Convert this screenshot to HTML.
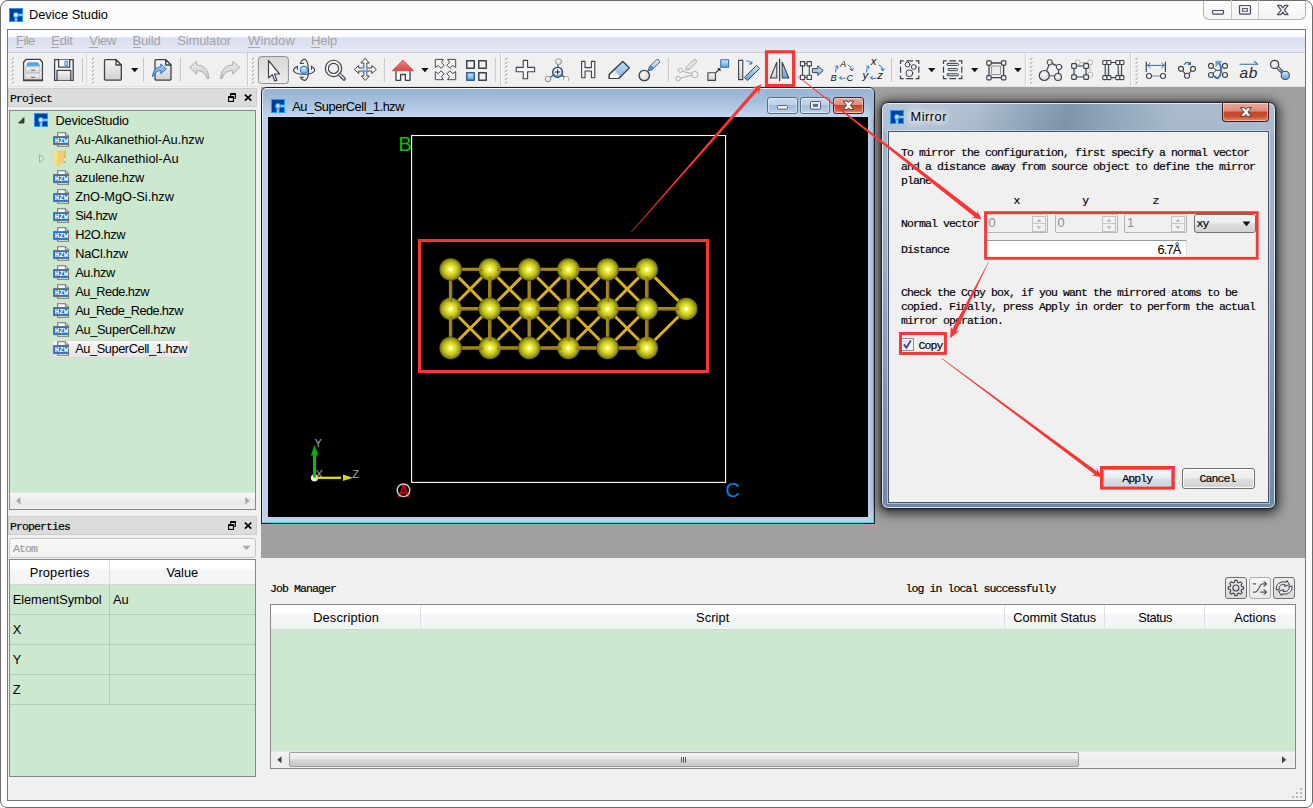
<!DOCTYPE html>
<html><head><meta charset="utf-8"><title>Device Studio</title>
<style>
html,body{margin:0;padding:0;background:#fff;}
body{width:1313px;height:808px;position:relative;overflow:hidden;font-family:"Liberation Sans",sans-serif;font-size:12.8px;}
.t{position:absolute;white-space:nowrap;}
.b{position:absolute;box-sizing:border-box;}
.a{position:absolute;}
svg{overflow:visible}

.frame{left:0;top:0;width:1313px;height:808px;border:1px solid #6b6b6b;border-radius:8px 8px 7px 7px;background:#fcfcfc;}
.client{left:7px;top:29px;width:1299px;height:772px;border:1px solid #767676;background:#f0f0f0;}
.menubar{left:8px;top:30px;width:1297px;height:22px;background:linear-gradient(#fff 0,#fafbfd 30%,#dadeee 36%,#dfe3f1 70%,#e6e9f5 100%);border-bottom:1px solid #c9cde0;}
.hdr{background:#dcdcdc;}
.green{background:#cce8cf;}
.th{background:linear-gradient(#fff 0,#fff 34%,#f5f6f8 40%,#f2f3f5 100%);border-right:1px solid #dcdfe3;border-bottom:1px solid #d5d5d5;}

</style></head><body>
<div class="b frame" style="left:0px;top:0px;width:1313px;height:808px;"></div>
<div class="b client" style="left:7px;top:29px;width:1299px;height:772px;"></div>
<svg class="a" style="left:9px;top:8px" width="14" height="14" viewBox="0 0 14 14"><rect x=".5" y=".5" width="13" height="13" fill="#003c98" stroke="#1e9bff" stroke-width="1"/><path d="M7 13.500V7H13.500" stroke="#1e9bff" stroke-width="3.200" fill="none"/><path d="M7 14V7H14" stroke="#92dbf0" stroke-width="1.600" fill="none"/><circle cx="6.900" cy="6.900" r="2.900" fill="#1e9bff"/><circle cx="6.900" cy="6.900" r="1.900" fill="#eef6fb"/></svg>
<div class="t" style="left:29px;top:7.06px;font-size:12.8px;line-height:16px;color:#000;letter-spacing:0.002px;">Device Studio</div>
<div class="b " style="left:1203px;top:1px;width:103px;height:19px;border:1px solid #b4b4b4;border-top:none;border-radius:0 0 6px 6px;background:linear-gradient(#fdfdfd,#f4f4f4);"></div>
<div class="b " style="left:1231px;top:0px;width:1px;height:19px;background:#c4c4c4"></div>
<div class="b " style="left:1258px;top:0px;width:1px;height:19px;background:#c4c4c4"></div>
<svg class="a" style="left:1203px;top:0" width="103" height="20" viewBox="0 0 103 20" fill="none" stroke="#4a4d63" stroke-width="1.2"><rect x="9.5" y="10.5" width="11" height="3.6" rx="0.8" fill="#f4f4f4"/><rect x="36.5" y="5.5" width="11" height="8.6" rx="0.8" fill="#f0f0f0"/><rect x="39.6" y="8.6" width="4.8" height="2.6" fill="#fff" stroke-width="1"/><path d="M74.50 5.40 L77.80 5.40 L79.75 7.92 L81.70 5.40 L85.00 5.40 L81.40 10.05 L85.00 14.70 L81.70 14.70 L79.75 12.18 L77.80 14.70 L74.50 14.70 L78.10 10.05z" fill="#f6f6f6" stroke-linejoin="round"/></svg>
<div class="b menubar" style="left:8px;top:30px;width:1297px;height:23px;"></div>
<div class="t" style="left:16px;top:32.80px;font-size:13px;line-height:16px;color:#a3a3a3;letter-spacing:-0.563px;">File</div>
<div class="t" style="left:51.2px;top:32.80px;font-size:13px;line-height:16px;color:#a3a3a3;letter-spacing:-0.202px;">Edit</div>
<div class="t" style="left:89.3px;top:32.80px;font-size:13px;line-height:16px;color:#a3a3a3;letter-spacing:-0.313px;">View</div>
<div class="t" style="left:132.5px;top:32.80px;font-size:13px;line-height:16px;color:#a3a3a3;letter-spacing:-0.184px;">Build</div>
<div class="t" style="left:177.3px;top:32.80px;font-size:13px;line-height:16px;color:#a3a3a3;letter-spacing:-0.136px;">Simulator</div>
<div class="t" style="left:248px;top:32.80px;font-size:13px;line-height:16px;color:#a3a3a3;letter-spacing:0.125px;">Window</div>
<div class="t" style="left:311px;top:32.80px;font-size:13px;line-height:16px;color:#a3a3a3;letter-spacing:-0.188px;">Help</div>
<div class="b " style="left:16px;top:47px;width:7px;height:1px;background:#a9a9a9"></div>
<div class="b " style="left:51.2px;top:47px;width:8px;height:1px;background:#a9a9a9"></div>
<div class="b " style="left:89.3px;top:47px;width:9px;height:1px;background:#a9a9a9"></div>
<div class="b " style="left:132.5px;top:47px;width:8px;height:1px;background:#a9a9a9"></div>
<div class="b " style="left:248px;top:47px;width:12px;height:1px;background:#a9a9a9"></div>
<div class="b " style="left:311px;top:47px;width:9px;height:1px;background:#a9a9a9"></div>
<div class="b " style="left:8px;top:53px;width:1297px;height:34px;background:#f0f0f0;"></div>
<div class="b " style="left:8px;top:86px;width:1297px;height:1px;background:#e3e3e3;"></div>
<svg class="a" style="left:0;top:0" width="1313" height="90" viewBox="0 0 1313 90"><defs><linearGradient id="gG" x1="0" y1="0" x2="0" y2="1"><stop offset="0" stop-color="#f6f6f6"/><stop offset="1" stop-color="#cfcfcf"/></linearGradient><linearGradient id="gB" x1="0" y1="0" x2="0" y2="1"><stop offset="0" stop-color="#d9e8f8"/><stop offset="1" stop-color="#5d9ee0"/></linearGradient><linearGradient id="gB2" x1="0" y1="0" x2="0" y2="1"><stop offset="0" stop-color="#c2dcf6"/><stop offset="1" stop-color="#8db8e6"/></linearGradient><linearGradient id="gR" x1="0" y1="0" x2="0" y2="1"><stop offset="0" stop-color="#f08a8a"/><stop offset="1" stop-color="#d84646"/></linearGradient><linearGradient id="gU" x1="0" y1="0" x2="0" y2="1"><stop offset="0" stop-color="#ebebeb"/><stop offset="1" stop-color="#cbcbcb"/></linearGradient><radialGradient id="rB" cx=".4" cy=".35" r=".7"><stop offset="0" stop-color="#e6f2fd"/><stop offset="1" stop-color="#3f8fe0"/></radialGradient><radialGradient id="rG" cx=".4" cy=".35" r=".8"><stop offset="0" stop-color="#fafafa"/><stop offset="1" stop-color="#cfcfcf"/></radialGradient><linearGradient id="gP" x1="0" y1="0" x2="0" y2="1"><stop offset="0" stop-color="#d8d8d8"/><stop offset="1" stop-color="#ececec"/></linearGradient><linearGradient id="gB3" x1="0" y1="0" x2="0" y2="1"><stop offset="0" stop-color="#b4d6f6"/><stop offset="1" stop-color="#4f94dc"/></linearGradient><linearGradient id="gB4" x1="0" y1="0" x2="0" y2="1"><stop offset="0" stop-color="#f2f7fd"/><stop offset="1" stop-color="#6ea6e2"/></linearGradient></defs><path d="M14.600000000000001 58.5l-2 2" stroke="#fff" stroke-width="1.1"/><path d="M14.0 57.599999999999994l-2.200 2.200" stroke="#b0b0b0" stroke-width="1.2"/><path d="M14.600000000000001 62.5l-2 2" stroke="#fff" stroke-width="1.1"/><path d="M14.0 61.599999999999994l-2.200 2.200" stroke="#b0b0b0" stroke-width="1.2"/><path d="M14.600000000000001 66.5l-2 2" stroke="#fff" stroke-width="1.1"/><path d="M14.0 65.6l-2.200 2.200" stroke="#b0b0b0" stroke-width="1.2"/><path d="M14.600000000000001 70.5l-2 2" stroke="#fff" stroke-width="1.1"/><path d="M14.0 69.6l-2.200 2.200" stroke="#b0b0b0" stroke-width="1.2"/><path d="M14.600000000000001 74.5l-2 2" stroke="#fff" stroke-width="1.1"/><path d="M14.0 73.6l-2.200 2.200" stroke="#b0b0b0" stroke-width="1.2"/><path d="M14.600000000000001 78.5l-2 2" stroke="#fff" stroke-width="1.1"/><path d="M14.0 77.6l-2.200 2.200" stroke="#b0b0b0" stroke-width="1.2"/><path d="M14.600000000000001 82.5l-2 2" stroke="#fff" stroke-width="1.1"/><path d="M14.0 81.6l-2.200 2.200" stroke="#b0b0b0" stroke-width="1.2"/><path d="M94.8 58.5l-2 2" stroke="#fff" stroke-width="1.1"/><path d="M94.2 57.599999999999994l-2.200 2.200" stroke="#b0b0b0" stroke-width="1.2"/><path d="M94.8 62.5l-2 2" stroke="#fff" stroke-width="1.1"/><path d="M94.2 61.599999999999994l-2.200 2.200" stroke="#b0b0b0" stroke-width="1.2"/><path d="M94.8 66.5l-2 2" stroke="#fff" stroke-width="1.1"/><path d="M94.2 65.6l-2.200 2.200" stroke="#b0b0b0" stroke-width="1.2"/><path d="M94.8 70.5l-2 2" stroke="#fff" stroke-width="1.1"/><path d="M94.2 69.6l-2.200 2.200" stroke="#b0b0b0" stroke-width="1.2"/><path d="M94.8 74.5l-2 2" stroke="#fff" stroke-width="1.1"/><path d="M94.2 73.6l-2.200 2.200" stroke="#b0b0b0" stroke-width="1.2"/><path d="M94.8 78.5l-2 2" stroke="#fff" stroke-width="1.1"/><path d="M94.2 77.6l-2.200 2.200" stroke="#b0b0b0" stroke-width="1.2"/><path d="M94.8 82.5l-2 2" stroke="#fff" stroke-width="1.1"/><path d="M94.2 81.6l-2.200 2.200" stroke="#b0b0b0" stroke-width="1.2"/><path d="M254.8 58.5l-2 2" stroke="#fff" stroke-width="1.1"/><path d="M254.2 57.599999999999994l-2.200 2.200" stroke="#b0b0b0" stroke-width="1.2"/><path d="M254.8 62.5l-2 2" stroke="#fff" stroke-width="1.1"/><path d="M254.2 61.599999999999994l-2.200 2.200" stroke="#b0b0b0" stroke-width="1.2"/><path d="M254.8 66.5l-2 2" stroke="#fff" stroke-width="1.1"/><path d="M254.2 65.6l-2.200 2.200" stroke="#b0b0b0" stroke-width="1.2"/><path d="M254.8 70.5l-2 2" stroke="#fff" stroke-width="1.1"/><path d="M254.2 69.6l-2.200 2.200" stroke="#b0b0b0" stroke-width="1.2"/><path d="M254.8 74.5l-2 2" stroke="#fff" stroke-width="1.1"/><path d="M254.2 73.6l-2.200 2.200" stroke="#b0b0b0" stroke-width="1.2"/><path d="M254.8 78.5l-2 2" stroke="#fff" stroke-width="1.1"/><path d="M254.2 77.6l-2.200 2.200" stroke="#b0b0b0" stroke-width="1.2"/><path d="M254.8 82.5l-2 2" stroke="#fff" stroke-width="1.1"/><path d="M254.2 81.6l-2.200 2.200" stroke="#b0b0b0" stroke-width="1.2"/><path d="M508.0 58.5l-2 2" stroke="#fff" stroke-width="1.1"/><path d="M507.4 57.599999999999994l-2.200 2.200" stroke="#b0b0b0" stroke-width="1.2"/><path d="M508.0 62.5l-2 2" stroke="#fff" stroke-width="1.1"/><path d="M507.4 61.599999999999994l-2.200 2.200" stroke="#b0b0b0" stroke-width="1.2"/><path d="M508.0 66.5l-2 2" stroke="#fff" stroke-width="1.1"/><path d="M507.4 65.6l-2.200 2.200" stroke="#b0b0b0" stroke-width="1.2"/><path d="M508.0 70.5l-2 2" stroke="#fff" stroke-width="1.1"/><path d="M507.4 69.6l-2.200 2.200" stroke="#b0b0b0" stroke-width="1.2"/><path d="M508.0 74.5l-2 2" stroke="#fff" stroke-width="1.1"/><path d="M507.4 73.6l-2.200 2.200" stroke="#b0b0b0" stroke-width="1.2"/><path d="M508.0 78.5l-2 2" stroke="#fff" stroke-width="1.1"/><path d="M507.4 77.6l-2.200 2.200" stroke="#b0b0b0" stroke-width="1.2"/><path d="M508.0 82.5l-2 2" stroke="#fff" stroke-width="1.1"/><path d="M507.4 81.6l-2.200 2.200" stroke="#b0b0b0" stroke-width="1.2"/><path d="M1033.0 58.5l-2 2" stroke="#fff" stroke-width="1.1"/><path d="M1032.4 57.599999999999994l-2.200 2.200" stroke="#b0b0b0" stroke-width="1.2"/><path d="M1033.0 62.5l-2 2" stroke="#fff" stroke-width="1.1"/><path d="M1032.4 61.599999999999994l-2.200 2.200" stroke="#b0b0b0" stroke-width="1.2"/><path d="M1033.0 66.5l-2 2" stroke="#fff" stroke-width="1.1"/><path d="M1032.4 65.6l-2.200 2.200" stroke="#b0b0b0" stroke-width="1.2"/><path d="M1033.0 70.5l-2 2" stroke="#fff" stroke-width="1.1"/><path d="M1032.4 69.6l-2.200 2.200" stroke="#b0b0b0" stroke-width="1.2"/><path d="M1033.0 74.5l-2 2" stroke="#fff" stroke-width="1.1"/><path d="M1032.4 73.6l-2.200 2.200" stroke="#b0b0b0" stroke-width="1.2"/><path d="M1033.0 78.5l-2 2" stroke="#fff" stroke-width="1.1"/><path d="M1032.4 77.6l-2.200 2.200" stroke="#b0b0b0" stroke-width="1.2"/><path d="M1033.0 82.5l-2 2" stroke="#fff" stroke-width="1.1"/><path d="M1032.4 81.6l-2.200 2.200" stroke="#b0b0b0" stroke-width="1.2"/><path d="M1138.3999999999999 58.5l-2 2" stroke="#fff" stroke-width="1.1"/><path d="M1137.8 57.599999999999994l-2.200 2.200" stroke="#b0b0b0" stroke-width="1.2"/><path d="M1138.3999999999999 62.5l-2 2" stroke="#fff" stroke-width="1.1"/><path d="M1137.8 61.599999999999994l-2.200 2.200" stroke="#b0b0b0" stroke-width="1.2"/><path d="M1138.3999999999999 66.5l-2 2" stroke="#fff" stroke-width="1.1"/><path d="M1137.8 65.6l-2.200 2.200" stroke="#b0b0b0" stroke-width="1.2"/><path d="M1138.3999999999999 70.5l-2 2" stroke="#fff" stroke-width="1.1"/><path d="M1137.8 69.6l-2.200 2.200" stroke="#b0b0b0" stroke-width="1.2"/><path d="M1138.3999999999999 74.5l-2 2" stroke="#fff" stroke-width="1.1"/><path d="M1137.8 73.6l-2.200 2.200" stroke="#b0b0b0" stroke-width="1.2"/><path d="M1138.3999999999999 78.5l-2 2" stroke="#fff" stroke-width="1.1"/><path d="M1137.8 77.6l-2.200 2.200" stroke="#b0b0b0" stroke-width="1.2"/><path d="M1138.3999999999999 82.5l-2 2" stroke="#fff" stroke-width="1.1"/><path d="M1137.8 81.6l-2.200 2.200" stroke="#b0b0b0" stroke-width="1.2"/><rect x="86.5" y="53" width="1" height="33" fill="#cdcdcd"/><rect x="87.5" y="53" width="1" height="33" fill="#fbfbfb"/><rect x="247.0" y="53" width="1" height="33" fill="#cdcdcd"/><rect x="248.0" y="53" width="1" height="33" fill="#fbfbfb"/><rect x="500.0" y="53" width="1" height="33" fill="#cdcdcd"/><rect x="501.0" y="53" width="1" height="33" fill="#fbfbfb"/><rect x="1024.9" y="53" width="1" height="33" fill="#cdcdcd"/><rect x="1025.9" y="53" width="1" height="33" fill="#fbfbfb"/><rect x="1129.9" y="53" width="1" height="33" fill="#cdcdcd"/><rect x="1130.9" y="53" width="1" height="33" fill="#fbfbfb"/><rect x="82.0" y="58" width="1" height="24" fill="#c6c6c6"/><rect x="143.0" y="58" width="1" height="24" fill="#c6c6c6"/><rect x="179.9" y="58" width="1" height="24" fill="#c6c6c6"/><rect x="383.9" y="58" width="1" height="24" fill="#c6c6c6"/><rect x="494.8" y="58" width="1" height="24" fill="#c6c6c6"/><rect x="667.8" y="58" width="1" height="24" fill="#c6c6c6"/><rect x="891.0" y="58" width="1" height="24" fill="#c6c6c6"/><path d="M131 68h7.4l-3.7 4.2z" fill="#111"/><path d="M421.2 68h7.4l-3.7 4.2z" fill="#111"/><path d="M928 68h7.4l-3.7 4.2z" fill="#111"/><path d="M971 68h7.4l-3.7 4.2z" fill="#111"/><path d="M1014.2 68h7.4l-3.7 4.2z" fill="#111"/><g fill="none" stroke="#3a424e" stroke-width="1.3" stroke-linejoin="round" stroke-linecap="round" ><path d="M23.600 80.300V62.300l2.600-3h13.600l2.600 3v18z" fill="#f8f8f8"/><path d="M26.500 65.700l1.600-3h9.800l1.600 3z" fill="#5aa0ea" stroke="#4a90dc" stroke-width=".7"/><rect x="26" y="66.900" width="14" height="5.700" fill="url(#gG)" stroke="#a4a8ae" stroke-width=".6"/><rect x="26" y="73.800" width="14" height="5.700" fill="url(#gG)" stroke="#a4a8ae" stroke-width=".6"/><path d="M31 70.200h4.200M31 77.300h4.200" stroke="#6a6a6a" stroke-width="1" stroke-linecap="butt"/><path d="M23.600 80.300h18.800" stroke-width="1.700"/></g><g fill="none" stroke="#3a424e" stroke-width="1.3" stroke-linejoin="round" stroke-linecap="round" ><path d="M54.6 59.6h18.6v20.8H54.6z" fill="#f4f4f4"/><path d="M58.6 59.8v7.4h11v-7.4" fill="#fafafa"/><rect x="65.3" y="61.2" width="2" height="4.2" stroke="#2f7fd6" stroke-width="1" fill="#cfe4fa"/><path d="M57 80.2V70.4h13.8v9.8" fill="url(#gG)"/></g><g fill="none" stroke="#3a424e" stroke-width="1.3" stroke-linejoin="round" stroke-linecap="round" ><path d="M104.5 60.6q0-1 1-1h10.5l5.3 5.3v14.2q0 1-1 1h-14.8q-1 0-1-1z" fill="url(#gG)"/><path d="M116 59.8v5.2h5.2z" fill="#fff"/></g><g fill="none" stroke="#3a424e" stroke-width="1.3" stroke-linejoin="round" stroke-linecap="round" ><path d="M155 60.6q0-1 1-1h9.7l5.3 5.3v14.2q0 1-1 1h-14q-1 0-1-1z" fill="url(#gG)"/><path d="M165.7 59.8v5.2h5.2z" fill="#fff"/><path d="M152.6 76.5c.4-6 3-9.3 8.200-9.600v-3l5.400 4.900-5.400 4.900v-3c-3.500 0-6 1.400-8.200 5.800z" fill="url(#gB3)" stroke="#2c74c4" stroke-width="1"/></g><path d="M189.600 67.300l7-5.800v3.600c7.500 0 11.800 4.600 12.300 13.400h-1.800c-1.600-5.400-4.800-7.800-10.500-7.800v3.600z" fill="url(#gU)" stroke="#adadad" stroke-width="1"/><path d="M239.800 67.300l-7-5.800v3.600c-7.500 0-11.800 4.600-12.300 13.400h1.800c1.600-5.400 4.800-7.800 10.500-7.800v3.600z" fill="url(#gU)" stroke="#adadad" stroke-width="1"/><rect x="258.400" y="56.600" width="30" height="27" rx="3" fill="url(#gP)" stroke="#8b8b8b" stroke-width="1"/><g fill="none" stroke="#3a424e" stroke-width="1.3" stroke-linejoin="round" stroke-linecap="round" ><path d="M268.500 60.400v17.600l3.900-3.400 2.300 6.300 2.100-.8-2.300-6.100h5z" fill="#fbfbfb" stroke-width="1.2"/></g><g fill="none" stroke="#3a424e" stroke-width="1.3" stroke-linejoin="round" stroke-linecap="round" ><path d="M297.300 66.600C293.400 68 292.400 70.400 294.600 72.100C298.200 75 309.800 75 313.400 72.100C315.600 70.400 314.700 68 311.500 66.400" stroke-width="1.150"/><path d="M300.500 63.400C301.400 60 303.400 58.700 305.200 59.600C308.800 61.600 309.400 75 306.900 79C305.400 81.300 302.600 80.700 300.500 77.400" stroke-width="1.150"/><path d="M300.200 63.400h3.400M300.200 77.300h3.300M297.400 66.300v3.100M311.500 66.100v3.100" stroke-width="1.050"/><circle cx="303.900" cy="69.900" r="3.500" fill="url(#gB4)" stroke="#2f84d8" stroke-width="1.100"/></g><g fill="none" stroke="#3a424e" stroke-width="1.3" stroke-linejoin="round" stroke-linecap="round" ><circle cx="333.500" cy="68.400" r="8.150" fill="#f3f3f3" stroke-width="1.150"/><circle cx="333.500" cy="68.400" r="5.100" fill="#f0f0f0" stroke-width="1.150"/><path d="M339.800 74.700l4.200 4.200" stroke-width="3.700"/><path d="M339.600 74.500l4.300 4.300" stroke="#f3f3f3" stroke-width="1.500"/></g><g fill="none" stroke="#3a424e" stroke-width="1.3" stroke-linejoin="round" stroke-linecap="round" ><path d="M365.300 58.500l4 4.500h-2.500v5h5v-2.500l4.500 4-4.500 4v-2.500h-5v5h2.500l-4 4.500-4-4.500h2.500v-5h-5v2.500l-4.500-4 4.500-4v2.500h5v-5h-2.500z" fill="#fafafa" stroke-width="1"/><circle cx="365.300" cy="69.500" r="2.600" fill="url(#rB)" stroke="none"/></g><g fill="none" stroke="#3a424e" stroke-width="1.3" stroke-linejoin="round" stroke-linecap="round" ><path d="M396 71v9.300h4.600v-5.800h4.800v5.800h4.600V71" fill="#fafafa" stroke-width="1.300"/></g><path d="M392.200 70.800L403 60l10.800 10.800z" fill="url(#gR)" stroke="#d24a4a" stroke-width=".8" stroke-linejoin="round"/><g fill="none" stroke="#3a424e" stroke-width="1.3" stroke-linejoin="round" stroke-linecap="round" ><path d="M435.9 59.4 L443.4 59.4 L441.4 62.5 L444.2 65.2 L441.1 68.3 L438.4 65.5 L435.3 67.5 L435.3 60.0z" fill="#f3f3f3" stroke-width=".95"/><path d="M455.1 59.4 L447.6 59.4 L449.6 62.5 L446.8 65.2 L449.9 68.3 L452.6 65.5 L455.7 67.5 L455.7 60.0z" fill="#f3f3f3" stroke-width=".95"/><path d="M435.9 79.7 L443.4 79.7 L441.4 76.6 L444.2 73.9 L441.1 70.8 L438.4 73.6 L435.3 71.6 L435.3 79.1z" fill="#f3f3f3" stroke-width=".95"/><path d="M455.1 79.7 L447.6 79.7 L449.6 76.6 L446.8 73.9 L449.9 70.8 L452.6 73.6 L455.7 71.6 L455.7 79.1z" fill="#f3f3f3" stroke-width=".95"/></g><g fill="none" stroke="#3a424e" stroke-width="1.3" stroke-linejoin="round" stroke-linecap="round" ><rect x="466.750" y="60.750" width="7.500" height="7.400" fill="#f4f4f4" stroke-width="1.500"/><rect x="478.750" y="60.750" width="7.500" height="7.400" fill="#f4f4f4" stroke-width="1.500"/><rect x="478.750" y="72.750" width="7.500" height="7.500" fill="#f4f4f4" stroke-width="1.500"/><rect x="466.750" y="72.750" width="7.500" height="7.500" fill="url(#gB)" stroke="#2c6498" stroke-width="1.500"/></g><g fill="none" stroke="#3a424e" stroke-width="1.3" stroke-linejoin="round" stroke-linecap="round" ><path d="M523.200 60.400h4.400v7h7v4.400h-7v7h-4.400v-7h-7v-4.400h7z" fill="#f6f6f6" stroke-width="1.100"/></g><g fill="none" stroke="#3a424e" stroke-width="1.3" stroke-linejoin="round" stroke-linecap="round" ><path d="M558 67v-3M553.500 75l-3.500 2.600M561.800 75l3 2.500" stroke-width="1.100"/><circle cx="558.600" cy="61.700" r="3" fill="url(#rG)" stroke="#8a8a8a" stroke-width=".9"/><circle cx="548" cy="79" r="2.800" fill="url(#rG)" stroke="#8a8a8a" stroke-width=".9"/><path d="M563.500 79.500a2.700 2.700 0 1 1 5 1" stroke="#8a8a8a" stroke-width=".9" fill="#fafafa"/><circle cx="557.600" cy="72.300" r="5" fill="url(#gB)" stroke-width="1.200"/><circle cx="557.600" cy="71.700" r="3.200" fill="#f4f9fe" stroke="none"/><path d="M555.400 72h4.400M557.600 69.800v4.400" stroke="#222" stroke-width="1"/></g><g fill="none" stroke="#3a424e" stroke-width="1.3" stroke-linejoin="round" stroke-linecap="round" ><path d="M581.600 61.400h3.400v6.200h6.400v-6.200h3.400v16.400h-3.400v-6.800h-6.400v6.800h-3.400z" fill="#f6f6f6" stroke-width="1.100"/></g><g fill="none" stroke="#3a424e" stroke-width="1.3" stroke-linejoin="round" stroke-linecap="round" ><path d="M609.200 74.500l13.600-13 6.500 6.300-10.600 10.700h-9.500z" fill="#fafafa" stroke-width="1.100"/><path d="M614 70l8.800-8.400 6.400 6.200-9 9z" fill="url(#gB2)" stroke="none"/><path d="M609.200 74.500l13.600-13 6.500 6.300-10.600 10.700h-9.500z" stroke-width="1.100"/></g><g fill="none" stroke="#3a424e" stroke-width="1.3" stroke-linejoin="round" stroke-linecap="round" ><circle cx="644.300" cy="75.500" r="5.200" fill="url(#rG)" stroke-width="1.300"/><path d="M648.400 70.200l1-3.400 7-7q1.700-.6 2.600.6.900 1.100.2 2.400l-7.200 6.800z" fill="#fafafa" stroke-width="1"/><path d="M648.400 70.200l1-3.400 1.800-1.800 2.800 2.800-2 1.800z" fill="#4a90dc" stroke="none"/><path d="M651.400 64.800l5-5 2.800 2.800-5 5z" fill="url(#gB2)" stroke="none" opacity=".7"/></g><g fill="#f4f4f4" stroke="#a6a6a6" stroke-width=".9"><path d="M682.300 71.200l10 2.600M680.300 78l11.600-2.800" fill="none"/><circle cx="680.400" cy="70.300" r="2.100"/><circle cx="678.200" cy="78.500" r="2.200"/><circle cx="694.800" cy="74.500" r="3.100"/><path d="M685.600 70l1-3.400 7-7q1.700-.6 2.600.6.900 1.100.2 2.400l-7.200 6.800z" fill="#e2e2e2"/></g><g fill="none" stroke="#3a424e" stroke-width="1.3" stroke-linejoin="round" stroke-linecap="round" ><rect x="707.900" y="72.800" width="7.600" height="7.600" fill="url(#gG)" stroke-width="1.100"/><rect x="720.800" y="59.800" width="7.800" height="7.400" fill="url(#gB)" stroke="#2c6fb8" stroke-width="1.100"/><path d="M716.400 72.200l3-3" stroke="#222" stroke-width="1.100"/><path d="M717.300 68.200h3.200v3.200z" fill="#222" stroke="none"/></g><g fill="none" stroke="#3a424e" stroke-width="1.3" stroke-linejoin="round" stroke-linecap="round" ><rect x="738.600" y="60.400" width="4.200" height="19.200" fill="url(#gG)" stroke-width="1.100"/><path d="M744.600 77.200l12-11.800 3 3.100-12 11.800z" fill="url(#gB)" stroke-width="1"/><path d="M746.800 60.800q3.400-.2 4.600 2.800M749.300 64h2.500v-2.500" stroke="#2c74c4" stroke-width="1"/></g><g fill="none" stroke="#3a424e" stroke-width="1.3" stroke-linejoin="round" stroke-linecap="round" ><path d="M779.600 59v21.800" stroke-width="1.250"/><path d="M776.800 62.200v15.800h-6.500z" fill="url(#gG)" stroke-width="1.100"/><path d="M782.200 62.200v15.800h6.600z" fill="url(#gB)" stroke-width="1.100"/></g><g fill="none" stroke="#3a424e" stroke-width="1.3" stroke-linejoin="round" stroke-linecap="round" ><path d="M802.500 66v9M809.300 66v9M804.800 63.700h2.200M804.800 77.300h2.200" stroke-width="1.100"/><rect x="800.4" y="61.6" width="4.300" height="4.300" fill="#fafafa" stroke-width="1.100"/><rect x="800.4" y="75.2" width="4.300" height="4.300" fill="#fafafa" stroke-width="1.100"/><rect x="807.1" y="61.6" width="4.300" height="4.300" fill="#fafafa" stroke-width="1.100"/><rect x="807.1" y="75.2" width="4.300" height="4.300" fill="#fafafa" stroke-width="1.100"/><path d="M812.800 68.600h5v-2.800l5.400 4.800-5.400 4.800v-2.800h-5z" fill="url(#gB2)" stroke-width="1"/></g><g fill="#151515" style="font-family:'Liberation Sans',sans-serif;font-style:italic;font-size:9.300px"><text x="840" y="67.300">A</text><text x="830.500" y="81">B</text><text x="846.500" y="81">C</text></g><g fill="#151515" style="font-family:'Liberation Sans',sans-serif;font-style:italic;font-size:11.500px"><text x="870.700" y="65.400">x</text><text x="862.600" y="79">y</text><text x="877.300" y="79.400">z</text></g><g fill="none" stroke="#2c74c4" stroke-width="1" stroke-linecap="round" transform="translate(0 0)"><path d="M848 65q3.600 1 4 5.600M850 69l2 1.800 1.400-2.200M845.200 78.200q-3 .9-5.400-.4M841.400 76.400l-1.800 1.400 1.700 1.700M835.600 72q-.8-3.600 1.800-5.400M835.500 66.200l2.200-.1.100 2.300"/></g><g fill="none" stroke="#2c74c4" stroke-width="1" stroke-linecap="round" transform="translate(31 0)"><path d="M848 65q3.600 1 4 5.600M850 69l2 1.800 1.400-2.200M845.200 78.200q-3 .9-5.400-.4M841.400 76.400l-1.800 1.400 1.700 1.700M835.600 72q-.8-3.600 1.800-5.400M835.500 66.200l2.200-.1.100 2.300"/></g><g fill="none" stroke="#3a424e" stroke-width="1.3" stroke-linejoin="round" stroke-linecap="round" ><path d="M900.5 64.0V60.8H903.7M915.5999999999999 60.8H918.8V64.0M918.8 75.39999999999999V78.6H915.5999999999999M903.7 78.6H900.5V75.39999999999999M906.3000000000001 60.8H912.9999999999999M906.3000000000001 78.6H912.9999999999999M900.5 66.6V72.8M918.8 66.6V72.8" stroke-width="1.200" stroke-linecap="butt" stroke-linejoin="miter"/><circle cx="907.600" cy="64.600" r="2.400" stroke-width="1"/><circle cx="913.800" cy="67" r="2.400" stroke-width="1"/><circle cx="909.400" cy="73.200" r="3.400" stroke-width="1"/></g><g fill="none" stroke="#3a424e" stroke-width="1.3" stroke-linejoin="round" stroke-linecap="round" ><path d="M943.5 64.0V60.8H946.7M958.5999999999999 60.8H961.8V64.0M961.8 75.39999999999999V78.6H958.5999999999999M946.7 78.6H943.5V75.39999999999999M949.3000000000001 60.8H955.9999999999999M949.3000000000001 78.6H955.9999999999999M943.5 66.6V72.8M961.8 66.6V72.8" stroke-width="1.200" stroke-linecap="butt" stroke-linejoin="miter"/><rect x="947" y="63.4" width="11.6" height="2" rx="1" stroke-width="1"/><rect x="948" y="68.6" width="9.6" height="2" rx="1" stroke-width="1"/><rect x="947" y="73.8" width="11.6" height="2" rx="1" stroke-width="1"/></g><g fill="none" stroke="#3a424e" stroke-width="1.3" stroke-linejoin="round" stroke-linecap="round" ><rect x="989" y="63" width="14.600" height="14.600" stroke-width="1.300"/><rect x="992" y="66" width="8.600" height="8.600" stroke="#8e8e8e" fill="#ececec" stroke-width="1"/><rect x="986.8" y="60.8" width="4.300" height="4.300" rx=".8" fill="#fafafa" stroke-width="1.200"/><rect x="986.8" y="75.6" width="4.300" height="4.300" rx=".8" fill="#fafafa" stroke-width="1.200"/><rect x="1001.5" y="60.8" width="4.300" height="4.300" rx=".8" fill="#fafafa" stroke-width="1.200"/><rect x="1001.5" y="75.6" width="4.300" height="4.300" rx=".8" fill="#fafafa" stroke-width="1.200"/></g><g fill="none" stroke="#3a424e" stroke-width="1.3" stroke-linejoin="round" stroke-linecap="round" ><path d="M1046.500 71l2.500-6M1052.300 63.600l4.600 2.300M1058.700 69.800l-.3 3.600" stroke-width="1.200"/><path d="M1049.300 75.800h5.400" stroke="#8a8a8a" stroke-width="1.600"/><circle cx="1044.300" cy="75.500" r="5" fill="url(#rG)" stroke-width="1.200"/><circle cx="1049.800" cy="62.300" r="2.700" fill="url(#rG)" stroke-width="1"/><circle cx="1059" cy="67" r="2.800" fill="url(#rG)" stroke-width="1"/><circle cx="1058" cy="77" r="3.500" fill="url(#rG)" stroke-width="1.100"/></g><g fill="#f7f7f7" stroke="#b9b9b9" stroke-width="1"><path d="M1078 62.500h12v12" fill="none"/><rect x="1075.5" y="60.2" width="4.400" height="4.400" rx=".8"/><rect x="1088" y="60.2" width="4.400" height="4.400" rx=".8"/><rect x="1088" y="72.5" width="4.400" height="4.400" rx=".8"/></g><g fill="none" stroke="#3a424e" stroke-width="1.3" stroke-linejoin="round" stroke-linecap="round" ><rect x="1074" y="66" width="12" height="11" stroke-width="1.200"/><rect x="1071.7" y="63.7" width="4.600" height="4.600" rx=".8" fill="#fafafa" stroke-width="1.200"/><rect x="1071.7" y="74.8" width="4.600" height="4.600" rx=".8" fill="#fafafa" stroke-width="1.200"/><rect x="1083.8" y="63.7" width="4.600" height="4.600" rx=".8" fill="#fafafa" stroke-width="1.200"/><rect x="1083.8" y="74.8" width="4.600" height="4.600" rx=".8" fill="#fafafa" stroke-width="1.200"/></g><g fill="none" stroke="#3a424e" stroke-width="1.3" stroke-linejoin="round" stroke-linecap="round" ><rect x="1105.200" y="62.500" width="3.400" height="15" fill="url(#gG)" stroke-width="1.100"/><rect x="1118.200" y="62.500" width="3.400" height="15" fill="url(#gG)" stroke-width="1.100"/><path d="M1111 62.500h5M1111 77.600h5" stroke-width="1.100"/><rect x="1102.8" y="60.5" width="4" height="4" rx=".8" fill="#fafafa" stroke-width="1.100"/><rect x="1102.8" y="75.6" width="4" height="4" rx=".8" fill="#fafafa" stroke-width="1.100"/><rect x="1106.9" y="60.5" width="4" height="4" rx=".8" fill="#fafafa" stroke-width="1.100"/><rect x="1106.9" y="75.6" width="4" height="4" rx=".8" fill="#fafafa" stroke-width="1.100"/><rect x="1115.8" y="60.5" width="4" height="4" rx=".8" fill="#fafafa" stroke-width="1.100"/><rect x="1115.8" y="75.6" width="4" height="4" rx=".8" fill="#fafafa" stroke-width="1.100"/><rect x="1119.9" y="60.5" width="4" height="4" rx=".8" fill="#fafafa" stroke-width="1.100"/><rect x="1119.9" y="75.6" width="4" height="4" rx=".8" fill="#fafafa" stroke-width="1.100"/></g><g fill="none" stroke="#3a424e" stroke-width="1.3" stroke-linejoin="round" stroke-linecap="round" ><path d="M1146.300 62v9.400M1165.400 62v9.400" stroke-width="1.200"/><path d="M1147.600 65.400h16.600M1150.200 63l-2.600 2.400 2.600 2.400M1161.600 63l2.600 2.400-2.600 2.400" stroke="#2c6aa8" stroke-width="1"/><path d="M1151.500 76h9" stroke="#666" stroke-width=".8"/><circle cx="1149" cy="76" r="2.500" stroke-width="1.100" fill="#f7f7f7"/><circle cx="1163" cy="76" r="2.500" stroke-width="1.100" fill="#f7f7f7"/></g><g fill="none" stroke="#3a424e" stroke-width="1.3" stroke-linejoin="round" stroke-linecap="round" ><path d="M1182.800 70.800l2.500 3.200M1191.200 70.800l-2.500 3.200" stroke-width="1.100"/><circle cx="1181" cy="68.850" r="2.500" fill="#f4f4f4" stroke-width="1.100"/><circle cx="1193" cy="68.850" r="2.500" fill="#f4f4f4" stroke-width="1.100"/><circle cx="1187" cy="75.800" r="2.500" fill="#f4f4f4" stroke-width="1.100"/><path d="M1184.300 64.500q2.200-3.200 5-1.600" stroke="#2c6aa8" stroke-width="1.100"/><path d="M1190.800 61.600v3.600l-3.400-.6z" fill="#1d5a96" stroke="none"/></g><g fill="none" stroke="#3a424e" stroke-width="1.3" stroke-linejoin="round" stroke-linecap="round" ><path d="M1213 67.300l3.200 3 -3.200 3M1216.200 70.300h4.400" stroke-width="1"/><circle cx="1211" cy="65.9" r="2.500" fill="url(#rG)" stroke-width="1.100"/><circle cx="1211" cy="75" r="2.500" fill="url(#rG)" stroke-width="1.100"/><circle cx="1225" cy="65.9" r="2.500" fill="url(#rG)" stroke-width="1.100"/><circle cx="1225" cy="75" r="2.500" fill="url(#rG)" stroke-width="1.100"/><path d="M1214.600 76.400q1.900 2.600 3.500 1.600c3.200-2.600 4.400-9.600 1.300-14.400" stroke="#41709f" stroke-width="1.900"/><path d="M1216 61.200h5.400l-.5 1.600-2 .4-2.900 3.200z" fill="#6b9dca" stroke="#6b9dca" stroke-width=".6"/></g><text x="1239.600" y="77.600" fill="#2a2a2a" style="font-family:'Liberation Sans',sans-serif;font-style:italic;font-size:15.500px;letter-spacing:.6px">ab</text><path d="M1240 64.300h17.600M1254.400 61.400l3.400 2.900" stroke="#2c6aa8" stroke-width="1.100" fill="none" stroke-linecap="round"/><g fill="none" stroke="#3a424e" stroke-width="1.3" stroke-linejoin="round" stroke-linecap="round" ><path d="M1277.400 67.200l5 5.200" stroke-width="3.400"/><path d="M1277.400 67.200l2.500 2.600" stroke="#e6e6e6" stroke-width="1.600"/><path d="M1279.900 69.800l2.500 2.600" stroke="#5d9ee0" stroke-width="1.600"/><circle cx="1274.600" cy="64.400" r="4.100" fill="url(#rG)" stroke-width="1.200"/><circle cx="1285.300" cy="75.400" r="4.100" fill="url(#gB)" stroke-width="1.100" stroke="#3a4f6c"/></g></svg>
<div class="b hdr" style="left:8px;top:88.2px;width:249px;height:18.4px;border:1px solid #cdcdcd;"></div>
<div class="t" style="left:10px;top:91.83px;font-size:11.5px;line-height:14px;color:#000;letter-spacing:-0.901px;-webkit-text-stroke:.18px;font-family:'Liberation Mono',monospace;">Project</div>
<svg class="a" style="left:228px;top:93.10000000000001px" width="8" height="9" viewBox="0 0 8 9" fill="none" stroke="#000" stroke-width="1.1"><path d="M2.600 3.200V.9h4.800v4.300H6.100"/><rect x="2.050" y=".2" width="5.900" height="1.700" fill="#000" stroke="none"/><rect x=".55" y="3.900" width="4.900" height="4.500" fill="#e6e6e6"/><rect x="0" y="3.300" width="6" height="1.800" fill="#000" stroke="none"/></svg>
<svg class="a" style="left:244px;top:93.9px" width="8.2" height="7.2" viewBox="0 0 8.2 7.2" fill="none" stroke="#000" stroke-width="1.650"><path d="M.9 .6l6.400 6M7.300 .6L.9 6.600"/></svg>
<div class="b " style="left:9px;top:110px;width:247px;height:400px;border:1px solid #828790;background:#cce8cf;"></div>
<div class="b " style="left:10px;top:492px;width:245px;height:17px;background:linear-gradient(#f7f7f7,#eaeaea 60%,#efefef);border-top:1px solid #e8e8e8;"></div>
<svg class="a" style="left:10px;top:492px" width="245" height="17" viewBox="0 0 245 17"><path d="M10.400 5v7.400L6 8.700z" fill="#a4a4a4"/><path d="M235.300 5v7.400l4.400-3.700z" fill="#a4a4a4"/></svg>
<svg class="a" style="left:18px;top:117px" width="7" height="7" viewBox="0 0 7 7"><path d="M6 .6v5.400H.6z" fill="#404040" stroke="#262626" stroke-width=".8"/></svg>
<svg class="a" style="left:34px;top:113px" width="14" height="14" viewBox="0 0 14 14"><rect x=".5" y=".5" width="13" height="13" fill="#003c98" stroke="#1e9bff" stroke-width="1"/><path d="M7 13.500V7H13.500" stroke="#1e9bff" stroke-width="3.200" fill="none"/><path d="M7 14V7H14" stroke="#92dbf0" stroke-width="1.600" fill="none"/><circle cx="6.900" cy="6.900" r="2.900" fill="#1e9bff"/><circle cx="6.900" cy="6.900" r="1.900" fill="#d8ecdc"/></svg>
<div class="t" style="left:55.4px;top:113.36px;font-size:12.8px;line-height:16px;color:#000;letter-spacing:-0.167px;">DeviceStudio</div>
<svg class="a" style="left:53px;top:132px" width="16" height="15" viewBox="0 0 16 15"><path d="M4.700 .7h7.600l3.200 3.200v10.400h-10.800z" fill="#fff" stroke="#6f6f6f" stroke-width="1.100"/><path d="M12.300 .7v3.200h3.200" fill="#dcdcdc" stroke="#6f6f6f" stroke-width=".9"/><rect x=".6" y="4.600" width="14.600" height="8" fill="#1c78d4" stroke="#6f6f6f" stroke-width="1"/><rect x="1.100" y="5.100" width="13.600" height="7" fill="#1c78d4"/><text x="1.800" y="11.100" fill="#fff" style="font-family:'Liberation Mono',monospace;font-weight:bold;font-size:7.400px;letter-spacing:.100px">HZW</text></svg>
<div class="t" style="left:75.2px;top:132.36px;font-size:12.8px;line-height:16px;color:#000;letter-spacing:0.002px;">Au-Alkanethiol-Au.hzw</div>
<svg class="a" style="left:53px;top:150px" width="14" height="17" viewBox="0 0 14 17"><defs><linearGradient id="fo1" x1="0" y1="0" x2="1" y2="0"><stop offset="0" stop-color="#f9eca6"/><stop offset="1" stop-color="#efd16a"/></linearGradient><linearGradient id="fo2" x1="0" y1="0" x2="1" y2="0"><stop offset="0" stop-color="#e4b655"/><stop offset=".25" stop-color="#f0d283"/><stop offset="1" stop-color="#eac46c"/></linearGradient></defs><path d="M5.600 .7L12.300 .4V13.100L5.600 14.500z" fill="url(#fo2)"/><path d="M11.500 .45l.8-.05v12.700l-.8 .15z" fill="#d6a545"/><path d="M.3 .4L6.500 1.700V16.100L.3 13.800z" fill="url(#fo1)" stroke="#e6c660" stroke-width=".4"/><rect x="10.900" y="8.600" width="1.400" height="2.300" fill="#fffef4"/><circle cx="11.500" cy="11.600" r=".65" fill="#6cc46a"/></svg>
<svg class="a" style="left:39px;top:154px" width="6" height="9" viewBox="0 0 6 9"><path d="M.6 .7v7.600l4.400-3.800z" fill="#fff" fill-opacity=".3" stroke="#a6a6a6" stroke-width="1"/></svg>
<div class="t" style="left:75.2px;top:151.36px;font-size:12.8px;line-height:16px;color:#000;letter-spacing:0.057px;">Au-Alkanethiol-Au</div>
<svg class="a" style="left:53px;top:170px" width="16" height="15" viewBox="0 0 16 15"><path d="M4.700 .7h7.600l3.200 3.200v10.400h-10.800z" fill="#fff" stroke="#6f6f6f" stroke-width="1.100"/><path d="M12.300 .7v3.200h3.200" fill="#dcdcdc" stroke="#6f6f6f" stroke-width=".9"/><rect x=".6" y="4.600" width="14.600" height="8" fill="#1c78d4" stroke="#6f6f6f" stroke-width="1"/><rect x="1.100" y="5.100" width="13.600" height="7" fill="#1c78d4"/><text x="1.800" y="11.100" fill="#fff" style="font-family:'Liberation Mono',monospace;font-weight:bold;font-size:7.400px;letter-spacing:.100px">HZW</text></svg>
<div class="t" style="left:75.2px;top:170.36px;font-size:12.8px;line-height:16px;color:#000;letter-spacing:-0.213px;">azulene.hzw</div>
<svg class="a" style="left:53px;top:189px" width="16" height="15" viewBox="0 0 16 15"><path d="M4.700 .7h7.600l3.200 3.200v10.400h-10.800z" fill="#fff" stroke="#6f6f6f" stroke-width="1.100"/><path d="M12.300 .7v3.200h3.200" fill="#dcdcdc" stroke="#6f6f6f" stroke-width=".9"/><rect x=".6" y="4.600" width="14.600" height="8" fill="#1c78d4" stroke="#6f6f6f" stroke-width="1"/><rect x="1.100" y="5.100" width="13.600" height="7" fill="#1c78d4"/><text x="1.800" y="11.100" fill="#fff" style="font-family:'Liberation Mono',monospace;font-weight:bold;font-size:7.400px;letter-spacing:.100px">HZW</text></svg>
<div class="t" style="left:75.2px;top:189.36px;font-size:12.8px;line-height:16px;color:#000;letter-spacing:-0.003px;">ZnO-MgO-Si.hzw</div>
<svg class="a" style="left:53px;top:208px" width="16" height="15" viewBox="0 0 16 15"><path d="M4.700 .7h7.600l3.200 3.200v10.400h-10.800z" fill="#fff" stroke="#6f6f6f" stroke-width="1.100"/><path d="M12.300 .7v3.200h3.200" fill="#dcdcdc" stroke="#6f6f6f" stroke-width=".9"/><rect x=".6" y="4.600" width="14.600" height="8" fill="#1c78d4" stroke="#6f6f6f" stroke-width="1"/><rect x="1.100" y="5.100" width="13.600" height="7" fill="#1c78d4"/><text x="1.800" y="11.100" fill="#fff" style="font-family:'Liberation Mono',monospace;font-weight:bold;font-size:7.400px;letter-spacing:.100px">HZW</text></svg>
<div class="t" style="left:75.2px;top:208.36px;font-size:12.8px;line-height:16px;color:#000;letter-spacing:-0.459px;">Si4.hzw</div>
<svg class="a" style="left:53px;top:227px" width="16" height="15" viewBox="0 0 16 15"><path d="M4.700 .7h7.600l3.200 3.200v10.400h-10.800z" fill="#fff" stroke="#6f6f6f" stroke-width="1.100"/><path d="M12.300 .7v3.200h3.200" fill="#dcdcdc" stroke="#6f6f6f" stroke-width=".9"/><rect x=".6" y="4.600" width="14.600" height="8" fill="#1c78d4" stroke="#6f6f6f" stroke-width="1"/><rect x="1.100" y="5.100" width="13.600" height="7" fill="#1c78d4"/><text x="1.800" y="11.100" fill="#fff" style="font-family:'Liberation Mono',monospace;font-weight:bold;font-size:7.400px;letter-spacing:.100px">HZW</text></svg>
<div class="t" style="left:75.2px;top:227.36px;font-size:12.8px;line-height:16px;color:#000;letter-spacing:-0.404px;">H2O.hzw</div>
<svg class="a" style="left:53px;top:246px" width="16" height="15" viewBox="0 0 16 15"><path d="M4.700 .7h7.600l3.200 3.200v10.400h-10.800z" fill="#fff" stroke="#6f6f6f" stroke-width="1.100"/><path d="M12.300 .7v3.200h3.200" fill="#dcdcdc" stroke="#6f6f6f" stroke-width=".9"/><rect x=".6" y="4.600" width="14.600" height="8" fill="#1c78d4" stroke="#6f6f6f" stroke-width="1"/><rect x="1.100" y="5.100" width="13.600" height="7" fill="#1c78d4"/><text x="1.800" y="11.100" fill="#fff" style="font-family:'Liberation Mono',monospace;font-weight:bold;font-size:7.400px;letter-spacing:.100px">HZW</text></svg>
<div class="t" style="left:75.2px;top:246.36px;font-size:12.8px;line-height:16px;color:#000;letter-spacing:-0.271px;">NaCl.hzw</div>
<svg class="a" style="left:53px;top:265px" width="16" height="15" viewBox="0 0 16 15"><path d="M4.700 .7h7.600l3.200 3.200v10.400h-10.800z" fill="#fff" stroke="#6f6f6f" stroke-width="1.100"/><path d="M12.300 .7v3.200h3.200" fill="#dcdcdc" stroke="#6f6f6f" stroke-width=".9"/><rect x=".6" y="4.600" width="14.600" height="8" fill="#1c78d4" stroke="#6f6f6f" stroke-width="1"/><rect x="1.100" y="5.100" width="13.600" height="7" fill="#1c78d4"/><text x="1.800" y="11.100" fill="#fff" style="font-family:'Liberation Mono',monospace;font-weight:bold;font-size:7.400px;letter-spacing:.100px">HZW</text></svg>
<div class="t" style="left:75.2px;top:265.36px;font-size:12.8px;line-height:16px;color:#000;letter-spacing:-0.361px;">Au.hzw</div>
<svg class="a" style="left:53px;top:284px" width="16" height="15" viewBox="0 0 16 15"><path d="M4.700 .7h7.600l3.200 3.200v10.400h-10.800z" fill="#fff" stroke="#6f6f6f" stroke-width="1.100"/><path d="M12.300 .7v3.200h3.200" fill="#dcdcdc" stroke="#6f6f6f" stroke-width=".9"/><rect x=".6" y="4.600" width="14.600" height="8" fill="#1c78d4" stroke="#6f6f6f" stroke-width="1"/><rect x="1.100" y="5.100" width="13.600" height="7" fill="#1c78d4"/><text x="1.800" y="11.100" fill="#fff" style="font-family:'Liberation Mono',monospace;font-weight:bold;font-size:7.400px;letter-spacing:.100px">HZW</text></svg>
<div class="t" style="left:75.2px;top:284.36px;font-size:12.8px;line-height:16px;color:#000;letter-spacing:-0.535px;">Au_Rede.hzw</div>
<svg class="a" style="left:53px;top:303px" width="16" height="15" viewBox="0 0 16 15"><path d="M4.700 .7h7.600l3.200 3.200v10.400h-10.800z" fill="#fff" stroke="#6f6f6f" stroke-width="1.100"/><path d="M12.300 .7v3.200h3.200" fill="#dcdcdc" stroke="#6f6f6f" stroke-width=".9"/><rect x=".6" y="4.600" width="14.600" height="8" fill="#1c78d4" stroke="#6f6f6f" stroke-width="1"/><rect x="1.100" y="5.100" width="13.600" height="7" fill="#1c78d4"/><text x="1.800" y="11.100" fill="#fff" style="font-family:'Liberation Mono',monospace;font-weight:bold;font-size:7.400px;letter-spacing:.100px">HZW</text></svg>
<div class="t" style="left:75.2px;top:303.36px;font-size:12.8px;line-height:16px;color:#000;letter-spacing:-0.612px;">Au_Rede_Rede.hzw</div>
<svg class="a" style="left:53px;top:322px" width="16" height="15" viewBox="0 0 16 15"><path d="M4.700 .7h7.600l3.200 3.200v10.400h-10.800z" fill="#fff" stroke="#6f6f6f" stroke-width="1.100"/><path d="M12.300 .7v3.200h3.200" fill="#dcdcdc" stroke="#6f6f6f" stroke-width=".9"/><rect x=".6" y="4.600" width="14.600" height="8" fill="#1c78d4" stroke="#6f6f6f" stroke-width="1"/><rect x="1.100" y="5.100" width="13.600" height="7" fill="#1c78d4"/><text x="1.800" y="11.100" fill="#fff" style="font-family:'Liberation Mono',monospace;font-weight:bold;font-size:7.400px;letter-spacing:.100px">HZW</text></svg>
<div class="t" style="left:75.2px;top:322.36px;font-size:12.8px;line-height:16px;color:#000;letter-spacing:-0.343px;">Au_SuperCell.hzw</div>
<div class="b " style="left:52px;top:339.5px;width:138px;height:18px;border:1px solid #d9d9d9;border-radius:3px;background:linear-gradient(#f8f8f8,#e5e5e5);"></div>
<svg class="a" style="left:53px;top:341px" width="16" height="15" viewBox="0 0 16 15"><path d="M4.700 .7h7.600l3.200 3.200v10.400h-10.800z" fill="#fff" stroke="#6f6f6f" stroke-width="1.100"/><path d="M12.300 .7v3.200h3.200" fill="#dcdcdc" stroke="#6f6f6f" stroke-width=".9"/><rect x=".6" y="4.600" width="14.600" height="8" fill="#1c78d4" stroke="#6f6f6f" stroke-width="1"/><rect x="1.100" y="5.100" width="13.600" height="7" fill="#1c78d4"/><text x="1.800" y="11.100" fill="#fff" style="font-family:'Liberation Mono',monospace;font-weight:bold;font-size:7.400px;letter-spacing:.100px">HZW</text></svg>
<div class="t" style="left:75.2px;top:341.36px;font-size:12.8px;line-height:16px;color:#000;letter-spacing:-0.429px;">Au_SuperCell_1.hzw</div>
<div class="b hdr" style="left:8px;top:516.2px;width:249px;height:18.4px;border:1px solid #cdcdcd;"></div>
<div class="t" style="left:10px;top:519.83px;font-size:11.5px;line-height:14px;color:#000;letter-spacing:-0.901px;-webkit-text-stroke:.18px;font-family:'Liberation Mono',monospace;">Properties</div>
<svg class="a" style="left:228px;top:521.1px" width="8" height="9" viewBox="0 0 8 9" fill="none" stroke="#000" stroke-width="1.1"><path d="M2.600 3.200V.9h4.800v4.300H6.100"/><rect x="2.050" y=".2" width="5.900" height="1.700" fill="#000" stroke="none"/><rect x=".55" y="3.900" width="4.900" height="4.500" fill="#e6e6e6"/><rect x="0" y="3.300" width="6" height="1.800" fill="#000" stroke="none"/></svg>
<svg class="a" style="left:244px;top:521.9000000000001px" width="8.2" height="7.2" viewBox="0 0 8.2 7.2" fill="none" stroke="#000" stroke-width="1.650"><path d="M.9 .6l6.400 6M7.300 .6L.9 6.600"/></svg>
<div class="b " style="left:9px;top:538px;width:247px;height:19.5px;border:1px solid #c3c7cc;border-radius:3px;background:linear-gradient(#f8f8f8,#f4f4f4 50%,#f1f1f1);"></div>
<div class="t" style="left:13px;top:541.93px;font-size:11.5px;line-height:14px;color:#9a9a9a;letter-spacing:-0.901px;-webkit-text-stroke:.18px;font-family:'Liberation Mono',monospace;">Atom</div>
<svg class="a" style="left:242px;top:545px" width="9" height="6" viewBox="0 0 9 6"><path d="M.5 .8h8L4.500 5z" fill="#a8a8a8"/></svg>
<div class="b " style="left:9px;top:559px;width:247px;height:218px;border:1px solid #828790;background:#cce8cf;"></div>
<div class="b th" style="left:10px;top:560px;width:100px;height:25px;"></div>
<div class="b th" style="left:110px;top:560px;width:145px;height:25px;border-right:none;"></div>
<div class="t" style="left:29.7px;top:564.56px;font-size:12.8px;line-height:16px;color:#000;letter-spacing:0.167px;">Properties</div>
<div class="t" style="left:166.5px;top:564.56px;font-size:12.8px;line-height:16px;color:#000;letter-spacing:-0.056px;">Value</div>
<div class="b " style="left:10px;top:614px;width:245px;height:1px;background:#b9c9bc;"></div>
<div class="t" style="left:12.8px;top:591.86px;font-size:12.8px;line-height:16px;color:#000;letter-spacing:-0.071px;">ElementSymbol</div>
<div class="t" style="left:113px;top:591.86px;font-size:12.8px;line-height:16px;color:#000;">Au</div>
<div class="b " style="left:10px;top:644px;width:245px;height:1px;background:#b9c9bc;"></div>
<div class="t" style="left:12.8px;top:621.86px;font-size:12.8px;line-height:16px;color:#000;">X</div>
<div class="b " style="left:10px;top:674px;width:245px;height:1px;background:#b9c9bc;"></div>
<div class="t" style="left:12.8px;top:651.86px;font-size:12.8px;line-height:16px;color:#000;">Y</div>
<div class="b " style="left:10px;top:704px;width:245px;height:1px;background:#b9c9bc;"></div>
<div class="t" style="left:12.8px;top:681.86px;font-size:12.8px;line-height:16px;color:#000;">Z</div>
<div class="b " style="left:109px;top:585px;width:1px;height:120px;background:#b9c9bc;"></div>
<div class="b " style="left:261px;top:87px;width:1044px;height:470.5px;background:#a0a0a0;"></div>
<div class="b " style="left:261px;top:87px;width:613.7px;height:437px;border:1px solid #1e1e1e;border-radius:6px 6px 0 0;background:#bad0ea;"></div>
<div class="b " style="left:262px;top:88px;width:611.7px;height:29px;border-right:1px solid #7fdcf2;border-radius:5px 5px 0 0;background:linear-gradient(#9ab4d4 0,#a3bcd9 35%,#b4cbe6 75%,#c3d8ef 100%);border-top:1px solid #f4f8fc;border-left:1px solid #dfeaf6;"></div>
<div class="b " style="left:262px;top:117px;width:611.7px;height:406px;border-right:1px solid #3fd8f2;border-bottom:1px solid #3fd8f2;border-left:1px solid #cfe0f3;background:#bcd2ec;"></div>
<svg class="a" style="left:271px;top:99px" width="14" height="14" viewBox="0 0 14 14"><rect x=".5" y=".5" width="13" height="13" fill="#003c98" stroke="#1e9bff" stroke-width="1"/><path d="M7 13.500V7H13.500" stroke="#1e9bff" stroke-width="3.200" fill="none"/><path d="M7 14V7H14" stroke="#92dbf0" stroke-width="1.600" fill="none"/><circle cx="6.900" cy="6.900" r="2.900" fill="#1e9bff"/><circle cx="6.900" cy="6.900" r="1.900" fill="#cfe0ee"/></svg>
<div class="t" style="left:292.2px;top:98.56px;font-size:12.8px;line-height:16px;color:#000;letter-spacing:-0.418px;">Au_SuperCell_1.hzw</div>
<div class="b " style="left:767.4px;top:97px;width:30.3px;height:17px;border:1px solid #586c8a;border-radius:3px;background:linear-gradient(#c9dbf0 0,#bcd0e8 45%,#a3bbd8 50%,#b4c9e2 85%,#c5d8ee 100%);box-shadow:inset 0 0 0 1px rgba(255,255,255,.45);"></div>
<div class="b " style="left:800.2px;top:97px;width:30.3px;height:17px;border:1px solid #586c8a;border-radius:3px;background:linear-gradient(#c9dbf0 0,#bcd0e8 45%,#a3bbd8 50%,#b4c9e2 85%,#c5d8ee 100%);box-shadow:inset 0 0 0 1px rgba(255,255,255,.45);"></div>
<div class="b " style="left:833.2px;top:97px;width:30.8px;height:17px;border:1px solid #5a1c24;border-radius:3px;background:linear-gradient(#e8a99b 0,#dc8d7c 45%,#c5442a 50%,#cf6a4a 85%,#e0a080 100%);box-shadow:inset 0 0 0 1px rgba(255,255,255,.45);"></div>
<svg class="a" style="left:760px;top:90px" width="120" height="30" viewBox="760 90 120 30"><rect x="777.500" y="105.500" width="10" height="3.600" rx=".8" fill="#f3f3f3" stroke="#5a6478" stroke-width="1"/><rect x="810.500" y="101.500" width="10" height="7.600" rx=".8" fill="#f3f3f3" stroke="#4c5670" stroke-width="1"/><rect x="813.300" y="104.200" width="4.400" height="2.200" fill="#5d7aa8" stroke="#3e4c6c" stroke-width=".7"/><path d="M843.20 101.00 L847.20 101.00 L848.50 102.69 L849.80 101.00 L853.80 101.00 L850.50 105.30 L853.80 109.60 L849.80 109.60 L848.50 107.91 L847.20 109.60 L843.20 109.60 L846.50 105.30z" fill="#f6f6f6" stroke="#50404c" stroke-width="1" stroke-linejoin="round"/></svg>
<div class="b " style="left:268px;top:117px;width:600px;height:400px;background:#000;"></div>
<svg class="a" style="left:268px;top:117px" width="600" height="400" viewBox="268 117 600 400"><defs><radialGradient id="au" cx=".5" cy=".5" r=".5"><stop offset="0" stop-color="#ffffff"/><stop offset=".06" stop-color="#ffffee"/><stop offset=".13" stop-color="#fafa9c"/><stop offset=".26" stop-color="#ecec3c"/><stop offset=".4" stop-color="#dede2a"/><stop offset=".62" stop-color="#bebe1e"/><stop offset=".82" stop-color="#969616"/><stop offset=".94" stop-color="#6c6c10"/><stop offset="1" stop-color="#3a3a08"/></radialGradient></defs><rect x="411.600" y="135.500" width="314" height="346.900" fill="none" stroke="#fff" stroke-width="1.100"/><g stroke="#d8b01e" stroke-width="3"><path d="M450.6 269.4L489.8 308.8"/><path d="M489.8 269.4L450.6 308.8"/><path d="M450.6 308.8L489.8 348.0"/><path d="M489.8 308.8L450.6 348.0"/><path d="M489.8 269.4L529.2 308.8"/><path d="M529.2 269.4L489.8 308.8"/><path d="M489.8 308.8L529.2 348.0"/><path d="M529.2 308.8L489.8 348.0"/><path d="M529.2 269.4L568.4 308.8"/><path d="M568.4 269.4L529.2 308.8"/><path d="M529.2 308.8L568.4 348.0"/><path d="M568.4 308.8L529.2 348.0"/><path d="M568.4 269.4L607.6 308.8"/><path d="M607.6 269.4L568.4 308.8"/><path d="M568.4 308.8L607.6 348.0"/><path d="M607.6 308.8L568.4 348.0"/><path d="M607.6 269.4L646.8 308.8"/><path d="M646.8 269.4L607.6 308.8"/><path d="M607.6 308.8L646.8 348.0"/><path d="M646.8 308.8L607.6 348.0"/><path d="M646.8 269.4L686.3 308.8"/><path d="M646.8 348.0L686.3 308.8"/></g><circle cx="450.6" cy="308.8" r="11.400" fill="url(#au)"/><circle cx="489.8" cy="269.4" r="11.400" fill="url(#au)"/><circle cx="489.8" cy="348.0" r="11.400" fill="url(#au)"/><circle cx="529.2" cy="308.8" r="11.400" fill="url(#au)"/><circle cx="568.4" cy="269.4" r="11.400" fill="url(#au)"/><circle cx="568.4" cy="348.0" r="11.400" fill="url(#au)"/><circle cx="607.6" cy="308.8" r="11.400" fill="url(#au)"/><circle cx="646.8" cy="269.4" r="11.400" fill="url(#au)"/><circle cx="646.8" cy="348.0" r="11.400" fill="url(#au)"/><circle cx="686.3" cy="308.8" r="11.400" fill="url(#au)"/><g stroke="#a88a16" stroke-width="3.400"><path d="M450.6 269.4L482.6 269.4"/><path d="M450.6 269.4L450.6 301.6"/><path d="M457.8 308.8L489.8 308.8"/><path d="M450.6 316.0L450.6 348.0"/><path d="M450.6 348.0L482.6 348.0"/><path d="M497.0 269.4L529.2 269.4"/><path d="M489.8 276.6L489.8 308.8"/><path d="M489.8 308.8L522.0 308.8"/><path d="M489.8 308.8L489.8 340.8"/><path d="M497.0 348.0L529.2 348.0"/><path d="M529.2 269.4L561.2 269.4"/><path d="M529.2 269.4L529.2 301.6"/><path d="M536.4 308.8L568.4 308.8"/><path d="M529.2 316.0L529.2 348.0"/><path d="M529.2 348.0L561.2 348.0"/><path d="M575.6 269.4L607.6 269.4"/><path d="M568.4 276.6L568.4 308.8"/><path d="M568.4 308.8L600.4 308.8"/><path d="M568.4 308.8L568.4 340.8"/><path d="M575.6 348.0L607.6 348.0"/><path d="M607.6 269.4L639.6 269.4"/><path d="M607.6 269.4L607.6 301.6"/><path d="M614.8 308.8L646.8 308.8"/><path d="M607.6 316.0L607.6 348.0"/><path d="M607.6 348.0L639.6 348.0"/><path d="M646.8 276.6L646.8 308.8"/><path d="M646.8 308.8L646.8 340.8"/><path d="M646.8 308.8L679.1 308.8"/></g><g stroke="#7a6410" stroke-width="1" opacity=".55" transform="translate(.9 .9)"><path d="M450.6 269.4L482.6 269.4"/><path d="M450.6 269.4L450.6 301.6"/><path d="M457.8 308.8L489.8 308.8"/><path d="M450.6 316.0L450.6 348.0"/><path d="M450.6 348.0L482.6 348.0"/><path d="M497.0 269.4L529.2 269.4"/><path d="M489.8 276.6L489.8 308.8"/><path d="M489.8 308.8L522.0 308.8"/><path d="M489.8 308.8L489.8 340.8"/><path d="M497.0 348.0L529.2 348.0"/><path d="M529.2 269.4L561.2 269.4"/><path d="M529.2 269.4L529.2 301.6"/><path d="M536.4 308.8L568.4 308.8"/><path d="M529.2 316.0L529.2 348.0"/><path d="M529.2 348.0L561.2 348.0"/><path d="M575.6 269.4L607.6 269.4"/><path d="M568.4 276.6L568.4 308.8"/><path d="M568.4 308.8L600.4 308.8"/><path d="M568.4 308.8L568.4 340.8"/><path d="M575.6 348.0L607.6 348.0"/><path d="M607.6 269.4L639.6 269.4"/><path d="M607.6 269.4L607.6 301.6"/><path d="M614.8 308.8L646.8 308.8"/><path d="M607.6 316.0L607.6 348.0"/><path d="M607.6 348.0L639.6 348.0"/><path d="M646.8 276.6L646.8 308.8"/><path d="M646.8 308.8L646.8 340.8"/><path d="M646.8 308.8L679.1 308.8"/></g><circle cx="450.6" cy="269.4" r="11.400" fill="url(#au)"/><circle cx="450.6" cy="348.0" r="11.400" fill="url(#au)"/><circle cx="489.8" cy="308.8" r="11.400" fill="url(#au)"/><circle cx="529.2" cy="269.4" r="11.400" fill="url(#au)"/><circle cx="529.2" cy="348.0" r="11.400" fill="url(#au)"/><circle cx="568.4" cy="308.8" r="11.400" fill="url(#au)"/><circle cx="607.6" cy="269.4" r="11.400" fill="url(#au)"/><circle cx="607.6" cy="348.0" r="11.400" fill="url(#au)"/><circle cx="646.8" cy="308.8" r="11.400" fill="url(#au)"/><text x="398.600" y="150.600" fill="#00c400" style="font-family:'Liberation Sans',sans-serif;font-size:20px">B</text><text x="725.600" y="497.400" fill="#0a84dc" style="font-family:'Liberation Sans',sans-serif;font-size:20px">C</text><circle cx="314.500" cy="477.800" r="3.600" fill="#ececec"/><g fill="#ababab" style="font-family:'Liberation Sans',sans-serif;font-size:11px"><text x="314.600" y="446.600">Y</text><text x="352.200" y="478.400">Z</text><text x="315.400" y="478.200">X</text></g><path d="M314.500 477.500V455" stroke="#00c000" stroke-width="3"/><path d="M314.500 445l3.700 10.600h-7.400z" fill="#00b400"/><path d="M315 477.800h26" stroke="#e6e600" stroke-width="2.200"/><path d="M353 477.800l-10-3.200v6.400z" fill="#d8d800"/><text x="398.100" y="497.300" fill="#dc0000" stroke="#dc0000" stroke-width=".35" style="font-family:'Liberation Sans',sans-serif;font-size:16px">A</text><circle cx="403.500" cy="490.300" r="6.300" fill="none" stroke="#cdcdcd" stroke-width="1.400"/></svg>
<div class="t" style="left:270px;top:582.43px;font-size:11.5px;line-height:14px;color:#000;letter-spacing:-0.901px;-webkit-text-stroke:.18px;font-family:'Liberation Mono',monospace;">Job Manager</div>
<div class="t" style="left:905.5px;top:582.43px;font-size:11.5px;line-height:14px;color:#000;letter-spacing:-0.901px;-webkit-text-stroke:.18px;font-family:'Liberation Mono',monospace;">log in local successfully</div>
<div class="b " style="left:270px;top:604px;width:1026px;height:165px;border:1px solid #828790;background:#cce8cf;"></div>
<div class="b th" style="left:271px;top:605px;width:150px;height:25px;"></div>
<div class="b th" style="left:421px;top:605px;width:584px;height:25px;"></div>
<div class="b th" style="left:1005px;top:605px;width:100px;height:25px;"></div>
<div class="b th" style="left:1105px;top:605px;width:100px;height:25px;"></div>
<div class="b th" style="left:1205px;top:605px;width:90px;height:25px;border-right:none;"></div>
<div class="t" style="left:313.2px;top:609.76px;font-size:12.8px;line-height:16px;color:#000;letter-spacing:0.162px;">Description</div>
<div class="t" style="left:696px;top:609.76px;font-size:12.8px;line-height:16px;color:#000;letter-spacing:0.130px;">Script</div>
<div class="t" style="left:1013.3px;top:609.76px;font-size:12.8px;line-height:16px;color:#000;letter-spacing:-0.094px;">Commit Status</div>
<div class="t" style="left:1138.3px;top:609.76px;font-size:12.8px;line-height:16px;color:#000;letter-spacing:-0.430px;">Status</div>
<div class="t" style="left:1234.2px;top:609.76px;font-size:12.8px;line-height:16px;color:#000;letter-spacing:-0.024px;">Actions</div>
<div class="b " style="left:271px;top:751px;width:1024px;height:17px;background:linear-gradient(#f4f4f4,#ececec 50%,#f0f0f0);border-top:1px solid #e6e6e6;"></div>
<div class="b " style="left:289px;top:752px;width:789.5px;height:14.6px;border:1px solid #9a9a9a;border-radius:2px;background:linear-gradient(#f5f5f5 0,#e8e8e8 45%,#d6d6d6 52%,#c8c8c8 100%);"></div>
<svg class="a" style="left:271px;top:751px" width="1024" height="17" viewBox="0 0 1024 17"><path d="M10.500 5.200v7L6.300 8.700z" fill="#404040"/><path d="M1011 5.200v7l4.200-3.500z" fill="#404040"/><path d="M410.500 6v5.500M412.500 6v5.500M414.500 6v5.500" stroke="#555" stroke-width="1"/></svg>
<div class="b " style="left:1225px;top:577px;width:22px;height:22px;border:1px solid #707070;border-radius:3px;background:linear-gradient(#ececec,#d9d9d9);"></div>
<div class="b " style="left:1249px;top:577px;width:22px;height:22px;border:1px solid #acacac;border-radius:3px;background:linear-gradient(#f6f6f6,#e8e8e8);"></div>
<div class="b " style="left:1273px;top:577px;width:22px;height:22px;border:1px solid #707070;border-radius:3px;background:linear-gradient(#ececec,#d9d9d9);"></div>
<svg class="a" style="left:1225px;top:577px" width="72" height="22" viewBox="1225 577 72 22" fill="none" stroke-linecap="round" stroke-linejoin="round"><g stroke="#3c434d" stroke-width="1.1"><circle cx="1235.900" cy="588" r="3"/><path d="M1241.59 586.43 L1243.51 586.85 L1243.51 589.15 L1241.59 589.57 L1241.03 590.91 L1242.10 592.57 L1240.47 594.20 L1238.81 593.13 L1237.47 593.69 L1237.05 595.61 L1234.75 595.61 L1234.33 593.69 L1232.99 593.13 L1231.33 594.20 L1229.70 592.57 L1230.77 590.91 L1230.21 589.57 L1228.29 589.15 L1228.29 586.85 L1230.21 586.43 L1230.77 585.09 L1229.70 583.43 L1231.33 581.80 L1232.99 582.87 L1234.33 582.31 L1234.75 580.39 L1237.05 580.39 L1237.47 582.31 L1238.81 582.87 L1240.47 581.80 L1242.10 583.43 L1241.03 585.09z"/></g><g stroke="#5c5c5c" stroke-width="1.2"><path d="M1253.300 583.900h2.400M1253.300 592.100h2c3.600 0 3.600-8.200 7.400-8.200h2.600M1260.600 592.100h4.800M1264 581.600l2.700 2.300-2.700 2.300M1264 589.800l2.700 2.300-2.700 2.300"/></g><g stroke="#353c46" stroke-width="1" fill="#ececec"><path d="M1276.36 589.52 L1276.20 588.18 L1276.37 586.83 L1276.87 585.55 L1277.67 584.39 L1278.75 583.40 L1280.04 582.62 L1281.49 582.10 L1283.03 581.85 L1284.60 581.89 L1286.13 582.22 L1286.85 580.52 L1289.58 584.83 L1284.42 586.26 L1285.14 584.56 L1284.21 584.37 L1283.25 584.34 L1282.31 584.49 L1281.43 584.81 L1280.65 585.28 L1280.00 585.88 L1279.51 586.59 L1279.20 587.37 L1279.10 588.19 L1279.20 589.00z"/><path d="M1291.84 586.48 L1292.00 587.82 L1291.83 589.17 L1291.33 590.45 L1290.53 591.61 L1289.45 592.60 L1288.16 593.38 L1286.71 593.90 L1285.17 594.15 L1283.60 594.11 L1282.07 593.78 L1281.35 595.48 L1278.62 591.17 L1283.78 589.74 L1283.06 591.44 L1283.99 591.63 L1284.95 591.66 L1285.89 591.51 L1286.77 591.19 L1287.55 590.72 L1288.20 590.12 L1288.69 589.41 L1289.00 588.63 L1289.10 587.81 L1289.00 587.00z"/></g></svg>
<svg class="a" style="left:1292px;top:787px" width="12" height="12" viewBox="0 0 12 12" fill="#b8b8b8"><rect x="8" y="1" width="2" height="2"/><rect x="8" y="5" width="2" height="2"/><rect x="4" y="5" width="2" height="2"/><rect x="8" y="9" width="2" height="2"/><rect x="4" y="9" width="2" height="2"/><rect x="0" y="9" width="2" height="2"/></svg>
<div class="b " style="left:881px;top:101.5px;width:394.5px;height:407.5px;border-radius:7px;box-shadow:0 2px 11px 3px rgba(0,0,0,.66),0 0 3px rgba(0,0,0,.55);background:#8aa0ba;"></div>
<div class="b " style="left:881px;top:101.5px;width:394.5px;height:407.5px;border:1px solid #20262e;border-radius:7px;background:linear-gradient(105deg,rgba(255,255,255,.10) 0,rgba(255,255,255,.20) 9%,rgba(255,255,255,.06) 24%,rgba(20,40,75,.10) 34%,rgba(20,40,75,.26) 47%,rgba(20,40,75,.14) 58%,rgba(255,255,255,.02) 74%,rgba(255,255,255,.05) 100%) 0 0/100% 29px no-repeat,linear-gradient(#a9bbcd 0,#a3b6c9 8%,#9fb2c6 30%,#7d95b2 75%,#6f88a6 100%);box-shadow:inset 0 0 0 1px rgba(235,242,250,.85);"></div>
<div class="b " style="left:887.5px;top:130.5px;width:381.5px;height:372.5px;border:1px solid #46546a;background:#f0f0f0;box-shadow:0 0 0 1px rgba(225,235,245,.55);"></div>
<svg class="a" style="left:890px;top:110px" width="14" height="14" viewBox="0 0 14 14"><rect x=".5" y=".5" width="13" height="13" fill="#003c98" stroke="#1e9bff" stroke-width="1"/><path d="M7 13.500V7H13.500" stroke="#1e9bff" stroke-width="3.200" fill="none"/><path d="M7 14V7H14" stroke="#92dbf0" stroke-width="1.600" fill="none"/><circle cx="6.900" cy="6.900" r="2.900" fill="#1e9bff"/><circle cx="6.900" cy="6.900" r="1.900" fill="#cddbe6"/></svg>
<div class="t" style="left:910.5px;top:108.96px;font-size:12.8px;line-height:16px;color:#000;letter-spacing:0.516px;text-shadow:0 0 6px #fff,0 0 9px #fff,0 0 12px #fff;">Mirror</div>
<div class="b " style="left:1222px;top:103px;width:47px;height:19px;border:1px solid #4b1a1f;border-top:none;border-radius:0 0 4px 4px;background:linear-gradient(#e9aaa0 0,#dc8878 45%,#c8442a 50%,#c9502f 75%,#dc9070 100%);box-shadow:inset 0 0 0 1px rgba(255,255,255,.4);"></div>
<svg class="a" style="left:1222px;top:103px" width="47" height="19" viewBox="0 0 47 19"><path d="M18.40 4.70 L22.50 4.70 L23.90 6.44 L25.30 4.70 L29.40 4.70 L25.95 9.00 L29.40 13.30 L25.30 13.30 L23.90 11.56 L22.50 13.30 L18.40 13.30 L21.85 9.00z" fill="#f8f8f8" stroke="#4a3a48" stroke-width="1" stroke-linejoin="round"/></svg>
<div class="t" style="left:901px;top:146.23px;font-size:11.5px;line-height:14px;color:#000;letter-spacing:-0.901px;-webkit-text-stroke:.18px;font-family:'Liberation Mono',monospace;">To mirror the configuration, first specify a normal vector</div>
<div class="t" style="left:901px;top:160.23px;font-size:11.5px;line-height:14px;color:#000;letter-spacing:-0.901px;-webkit-text-stroke:.18px;font-family:'Liberation Mono',monospace;">and a distance away from source object to define the mirror</div>
<div class="t" style="left:901px;top:174.23px;font-size:11.5px;line-height:14px;color:#000;letter-spacing:-0.901px;-webkit-text-stroke:.18px;font-family:'Liberation Mono',monospace;">plane.</div>
<div class="t" style="left:901px;top:285.93px;font-size:11.5px;line-height:14px;color:#000;letter-spacing:-0.901px;-webkit-text-stroke:.18px;font-family:'Liberation Mono',monospace;">Check the Copy box, if you want the mirrored atoms to be</div>
<div class="t" style="left:901px;top:299.93px;font-size:11.5px;line-height:14px;color:#000;letter-spacing:-0.901px;-webkit-text-stroke:.18px;font-family:'Liberation Mono',monospace;">copied. Finally, press Apply in order to perform the actual</div>
<div class="t" style="left:901px;top:313.93px;font-size:11.5px;line-height:14px;color:#000;letter-spacing:-0.901px;-webkit-text-stroke:.18px;font-family:'Liberation Mono',monospace;">mirror operation.</div>
<div class="t" style="left:1013.5px;top:193.73px;font-size:11.5px;line-height:14px;color:#000;letter-spacing:-0.901px;-webkit-text-stroke:.18px;font-family:'Liberation Mono',monospace;">x</div>
<div class="t" style="left:1082.2px;top:193.73px;font-size:11.5px;line-height:14px;color:#000;letter-spacing:-0.901px;-webkit-text-stroke:.18px;font-family:'Liberation Mono',monospace;">y</div>
<div class="t" style="left:1152.6px;top:193.73px;font-size:11.5px;line-height:14px;color:#000;letter-spacing:-0.901px;-webkit-text-stroke:.18px;font-family:'Liberation Mono',monospace;">z</div>
<div class="t" style="left:901px;top:216.73px;font-size:11.5px;line-height:14px;color:#000;letter-spacing:-0.901px;-webkit-text-stroke:.18px;font-family:'Liberation Mono',monospace;">Normal vector</div>
<div class="t" style="left:901px;top:242.83px;font-size:11.5px;line-height:14px;color:#000;letter-spacing:-0.901px;-webkit-text-stroke:.18px;font-family:'Liberation Mono',monospace;">Distance</div>
<div class="b " style="left:985.5px;top:214px;width:62px;height:19px;border:1px solid #b4b4b4;border-top-color:#d0d0d0;border-radius:2px;background:#f0f0f0;"></div>
<div class="b " style="left:1031.5px;top:215.5px;width:14px;height:16px;border:1px solid #c2c2c2;background:#f2f2f2;"></div>
<div class="b " style="left:1031.5px;top:223px;width:14px;height:1px;background:#c8c8c8;"></div>
<svg class="a" style="left:1031.5px;top:215.500px" width="14" height="16" viewBox="0 0 14 16"><path d="M4.500 5.800L7 3l2.500 2.800z" fill="#b4b4b4"/><path d="M4.500 10.200L7 13l2.500-2.800z" fill="#b4b4b4"/></svg>
<div class="t" style="left:988.5px;top:215.36px;font-size:12.8px;line-height:16px;color:#8e8e8e;">0</div>
<div class="b " style="left:1054.5px;top:214px;width:63px;height:19px;border:1px solid #b4b4b4;border-top-color:#d0d0d0;border-radius:2px;background:#f0f0f0;"></div>
<div class="b " style="left:1101.5px;top:215.5px;width:14px;height:16px;border:1px solid #c2c2c2;background:#f2f2f2;"></div>
<div class="b " style="left:1101.5px;top:223px;width:14px;height:1px;background:#c8c8c8;"></div>
<svg class="a" style="left:1101.5px;top:215.500px" width="14" height="16" viewBox="0 0 14 16"><path d="M4.500 5.800L7 3l2.500 2.800z" fill="#b4b4b4"/><path d="M4.500 10.200L7 13l2.500-2.800z" fill="#b4b4b4"/></svg>
<div class="t" style="left:1057.5px;top:215.36px;font-size:12.8px;line-height:16px;color:#8e8e8e;">0</div>
<div class="b " style="left:1124px;top:214px;width:63px;height:19px;border:1px solid #b4b4b4;border-top-color:#d0d0d0;border-radius:2px;background:#f0f0f0;"></div>
<div class="b " style="left:1171px;top:215.5px;width:14px;height:16px;border:1px solid #c2c2c2;background:#f2f2f2;"></div>
<div class="b " style="left:1171px;top:223px;width:14px;height:1px;background:#c8c8c8;"></div>
<svg class="a" style="left:1171px;top:215.500px" width="14" height="16" viewBox="0 0 14 16"><path d="M4.500 5.800L7 3l2.500 2.800z" fill="#b4b4b4"/><path d="M4.500 10.200L7 13l2.500-2.800z" fill="#b4b4b4"/></svg>
<div class="t" style="left:1127px;top:215.36px;font-size:12.8px;line-height:16px;color:#8e8e8e;">1</div>
<div class="b " style="left:1193.5px;top:214px;width:62px;height:19px;border:1px solid #707070;border-radius:3px;background:linear-gradient(#f3f3f3 0,#ececec 48%,#dedede 52%,#d2d2d2 100%);"></div>
<div class="t" style="left:1196.5px;top:217.13px;font-size:11.5px;line-height:14px;color:#000;letter-spacing:-0.901px;-webkit-text-stroke:.18px;font-family:'Liberation Mono',monospace;">xy</div>
<svg class="a" style="left:1242px;top:221px" width="9" height="6" viewBox="0 0 9 6"><path d="M.6 .6h7.800L4.500 5.200z" fill="#111"/></svg>
<div class="b " style="left:985.5px;top:239.5px;width:201px;height:18px;border:1px solid #e2e2e2;border-top-color:#9a9a9a;background:#fff;"></div>
<div class="t" style="left:1157.5px;top:241.56px;font-size:12.8px;line-height:16px;color:#000;letter-spacing:-0.832px;">6.7Å</div>
<div class="b " style="left:901px;top:338px;width:13px;height:13px;border:1px solid #8e8f8f;background:linear-gradient(135deg,#d9dce0,#f4f4f4 70%);box-shadow:inset 0 0 0 1px #f4f4f4;"></div>
<svg class="a" style="left:901px;top:338px" width="13" height="13" viewBox="0 0 13 13"><path d="M3 6.400l2.400 3.400L9.800 2.600" fill="none" stroke="#3b4ea2" stroke-width="1.900"/></svg>
<div class="t" style="left:918.6px;top:338.93px;font-size:11.5px;line-height:14px;color:#000;letter-spacing:-0.901px;-webkit-text-stroke:.18px;font-family:'Liberation Mono',monospace;">Copy</div>
<div class="b " style="left:1103px;top:469px;width:69px;height:18.5px;border:1px solid #3cc4f0;border-radius:2px;background:linear-gradient(#f1f5f7 0,#e6ecf0 48%,#d6dfe5 52%,#cad5dc 100%);"></div>
<div class="t" style="left:1122.2px;top:471.83px;font-size:11.5px;line-height:14px;color:#000;letter-spacing:-0.901px;-webkit-text-stroke:.18px;font-family:'Liberation Mono',monospace;">Apply</div>
<div class="b " style="left:1182px;top:468.3px;width:73px;height:20.5px;border:1px solid #707070;border-radius:3px;background:linear-gradient(#f4f4f4 0,#ececec 48%,#dedede 52%,#d2d2d2 100%);box-shadow:inset 0 0 0 1px #fbfbfb;"></div>
<div class="t" style="left:1199.5px;top:471.83px;font-size:11.5px;line-height:14px;color:#000;letter-spacing:-0.901px;-webkit-text-stroke:.18px;font-family:'Liberation Mono',monospace;">Cancel</div>
<svg class="a" style="left:0;top:0" width="1313" height="808" viewBox="0 0 1313 808"><rect x="419.50" y="240.50" width="288.00" height="131.00" fill="none" stroke="#f83636" stroke-width="3"/><rect x="766.50" y="51.80" width="27.10" height="33.70" fill="none" stroke="#f83636" stroke-width="3.2"/><rect x="985.50" y="212.60" width="271.70" height="45.70" fill="none" stroke="#f83636" stroke-width="2.8"/><rect x="900.50" y="333.50" width="44.90" height="19.90" fill="none" stroke="#f83636" stroke-width="3"/><rect x="1101.50" y="467.50" width="71.80" height="20.60" fill="none" stroke="#f83636" stroke-width="3"/><path d="M631.6 232.3 L758.1 90.6 L758.6 94.4 L761.4 84.2 L751.7 88.3 L755.4 88.3 L631.0 231.9z" fill="#f83636"/><path d="M797.7 76.8 L974.8 217.0 L971.3 217.4 L981.6 219.6 L976.9 210.1 L977.4 213.6 L798.1 76.2z" fill="#f83636"/><path d="M988.4 261.9 L952.1 329.6 L950.7 326.1 L950.2 338.2 L959.6 330.6 L956.0 331.6 L988.8 262.1z" fill="#f83636"/><path d="M941.6 358.8 L1094.8 474.5 L1091.1 475.2 L1101.5 477.2 L1096.6 467.8 L1097.0 471.6 L942.0 358.2z" fill="#f83636"/></svg>
</body></html>
